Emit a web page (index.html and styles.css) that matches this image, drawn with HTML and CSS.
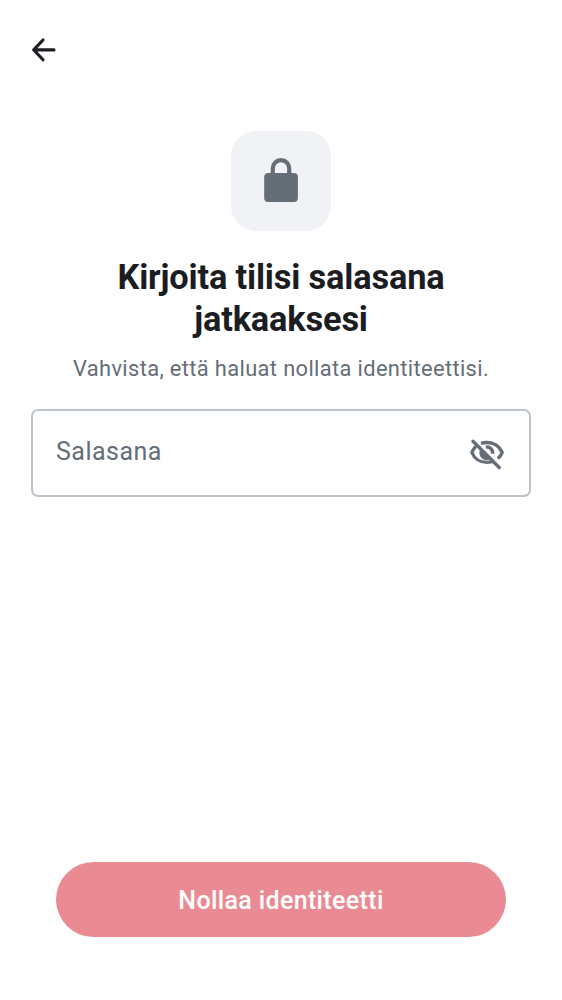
FILE: index.html
```html
<!DOCTYPE html>
<html lang="fi">
<head>
<meta charset="utf-8">
<title>Nollaa identiteetti</title>
<link rel="stylesheet" href="styles.css">
</head>
<body>
<main class="screen">
  <header class="top-bar">
    <svg class="back" viewBox="0 0 38 38" aria-hidden="true"><path d="M18 9 8.700 18.900 18 28.800M8.700 18.900H29"/></svg>
  </header>
  <section class="hero">
    <div class="hero-icon">
      <svg class="lock" viewBox="0 0 50 50" aria-hidden="true"><rect x="8.200" y="16.900" width="33.700" height="29.100" rx="4"/><path class="shackle" d="M16.800 18v-5.700a8.200 8.200 0 0 1 16.400 0v5.700"/></svg>
    </div>
    <h1 class="title">Kirjoita tilisi salasana<br>jatkaaksesi</h1>
    <p class="subtitle">Vahvista, että haluat nollata identiteettisi.</p>
  </section>
  <div class="field">
    <span class="placeholder">Salasana</span>
    <svg class="eye" viewBox="0 0 38 38" aria-hidden="true">
      <path class="line" d="M5 7.300 31.200 33.500"/>
      <path class="line cut" d="M13 9.300Q15.800 8.500 19 8.500C26 8.500 31.700 12.500 34.200 18.500Q33 21.800 29.800 24.500"/>
      <path class="line" d="M7 13.300Q4.800 15.700 3.900 18.500C6.200 24.500 12 28.400 19 28.400Q21.500 28.400 24 27.700"/>
      <path class="iris" d="M12.700 14.800 22.700 24.800A7.200 7.200 0 0 1 12.700 14.800Z"/>
      <path class="line cut" d="M17.900 13.100A5.800 5.800 0 0 1 24.600 19.800"/>
    </svg>
  </div>
  <button class="submit" type="button">Nollaa identiteetti</button>
</main>
</body>
</html>
```
FILE: styles.css
```css
* { box-sizing: border-box; }
body { margin: 0; background: #fff; font-family: Roboto, sans-serif; }
.screen { height: 1000px; padding: 31px 31px 63px; display: flex; flex-direction: column; }
.top-bar { height: 100px; }
.back { display: block; width: 38px; height: 38px; margin-left: -6px; fill: none; stroke: #1b1d22; stroke-width: 3.100; stroke-linecap: round; stroke-linejoin: round; }
.hero { display: flex; flex-direction: column; align-items: center; text-align: center; }
.hero-icon { width: 100px; height: 100px; border-radius: 25px; background: #f0f2f5; display: grid; place-items: center; }
.lock { width: 50px; height: 50px; fill: #656d77; }
.shackle { fill: none; stroke: #656d77; stroke-width: 4.200; }
.title { margin: 25px 0 0; font-size: 34.375px; line-height: 42px; font-weight: 700; letter-spacing: -.16px; color: #1b1d22; }
.subtitle { margin: 14px 0 0; font-size: 21.875px; line-height: 29px; letter-spacing: .36px; color: #656d77; }
.field { height: 88px; margin-top: 26px; padding: 0 23px; border: 2px solid #bdc4cc; border-radius: 7px; display: flex; align-items: center; justify-content: space-between; }
.placeholder { padding-bottom: 4px; font-size: 25px; letter-spacing: .48px; color: #656d77; }
.eye { width: 38px; height: 38px; }
.line { fill: none; stroke: #656d77; stroke-width: 3.400; stroke-linecap: round; stroke-linejoin: round; }
.cut { stroke-linecap: butt; }
.iris { fill: #656d77; }
.submit { height: 75px; margin: auto 25px 0; padding: 1px 0 0; border: 0; border-radius: 38px; background: #ea8b94; color: #fff; font: 500 25px/37px Roboto, sans-serif; letter-spacing: .36px; }
```
